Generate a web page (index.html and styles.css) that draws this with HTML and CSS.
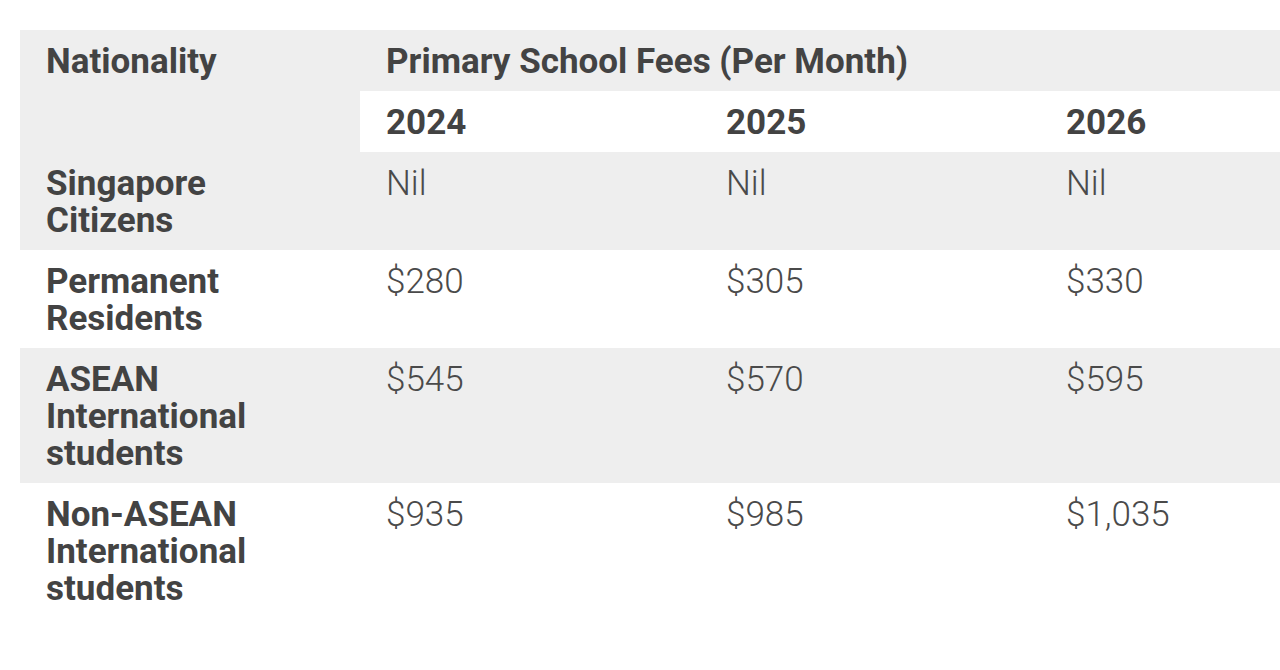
FILE: index.html
```html
<!DOCTYPE html>
<html>
<head>
<meta charset="utf-8">
<link rel="stylesheet" href="styles.css">
</head>
<body>
<div class="wrap">
<table class="fees">
  <colgroup><col class="c"><col class="c"><col class="c"><col class="c"></colgroup>
  <thead>
    <tr class="gray">
      <th rowspan="2" class="nat">Nationality</th>
      <th colspan="3">Primary School Fees (Per Month)</th>
    </tr>
    <tr class="white">
      <th>2024</th><th>2025</th><th>2026</th>
    </tr>
  </thead>
  <tbody>
    <tr class="gray"><th>Singapore Citizens</th><td>Nil</td><td>Nil</td><td>Nil</td></tr>
    <tr class="white"><th>Permanent Residents</th><td>$280</td><td>$305</td><td>$330</td></tr>
    <tr class="gray"><th>ASEAN International students</th><td>$545</td><td>$570</td><td>$595</td></tr>
    <tr class="white"><th>Non-ASEAN International students</th><td>$935</td><td>$985</td><td>$1,035</td></tr>
  </tbody>
</table>
</div>
</body>
</html>
```

FILE: styles.css
```css
html, body {
  margin: 0;
  padding: 0;
  background: #ffffff;
  overflow: hidden;
}
.wrap {
  padding: 30px 0 0 20px;
  width: 1400px;
}
.fees {
  border-collapse: collapse;
  table-layout: fixed;
  width: 1360px;
  font-family: Roboto, "Liberation Sans", sans-serif;
  font-size: 35px;
  line-height: 37px;
}
.fees .c { width: 340px; }
.fees th, .fees td {
  text-align: left;
  vertical-align: top;
  padding: 13px 26px 11px 26px;
}
.fees th {
  font-weight: 700;
  color: #434343;
}
.fees td {
  font-weight: 300;
  color: #4a4a4a;
}
.fees th:first-child { padding-right: 80px; }
.gray { background: #eeeeee; }
.white { background: #ffffff; }
.fees thead .white th { background: #ffffff; }
.fees .nat { background: #eeeeee; }
```
